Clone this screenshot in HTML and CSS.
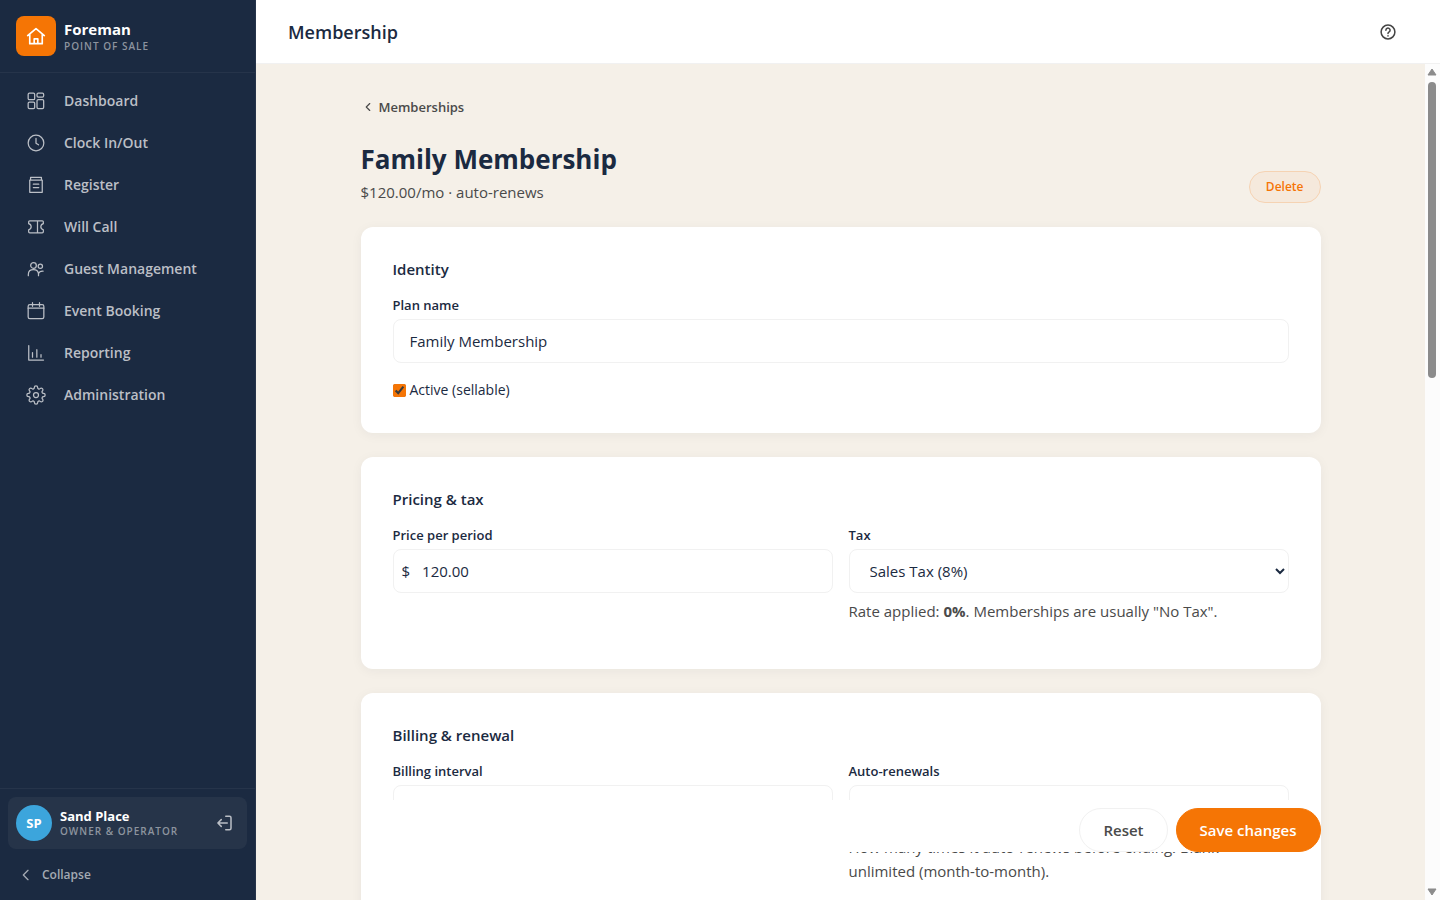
FILE: index.html
```html
<!DOCTYPE html>
<html lang="en">
<head>
  <meta charset="UTF-8" />
  <meta name="viewport" content="width=device-width, initial-scale=1.0"/>
  <title>Membership</title>
  <link rel="stylesheet" href="styles.css">
</head>
<body>
  <div class="app">
    <aside class="sidebar">
      <div class="brand">
        <div class="brand-logo">
          <svg class="icon" viewBox="0 0 24 24"><path d="M2 11.500L12 3.200l10 8.300M4.500 10v11.200h15V10M9.800 21v-5.500h4.400V21"/></svg>
        </div>
        <div>
          <div class="brand-name">Foreman</div>
          <div class="brand-sub">Point of Sale</div>
        </div>
      </div>

      <nav class="nav">
        <a href="#">
          <svg class="icon" viewBox="0 0 24 24"><rect x="2.600" y="2.600" width="7.800" height="7.800" rx="1.500"/><rect x="2.600" y="13.300" width="7.800" height="7.800" rx="1.500"/><rect x="13.200" y="2.600" width="8" height="4.600" rx="1.500"/><rect x="13.200" y="10.200" width="8" height="10.900" rx="1.500"/></svg>
          Dashboard
        </a>
        <a href="#">
          <svg class="icon" viewBox="0 0 24 24"><circle cx="12" cy="12" r="9.400"/><path d="M12 6.500v5.800l3 1.900"/></svg>
          Clock In/Out
        </a>
        <a href="#">
          <svg class="icon" viewBox="0 0 24 24"><path d="M5.500 6V2.800h13V6M4.500 6h15v14.800h-15zM8.800 11h6.500M8.800 15h6.500"/></svg>
          Register
        </a>
        <a href="#">
          <svg class="icon" viewBox="0 0 24 24"><path d="M4.500 4.500h15a1.300 1.300 0 0 1 1.300 1.300V8c-2 .6-3 1.800-3 3.700s1 3.100 3 3.700v2.300a1.300 1.300 0 0 1-1.300 1.300h-15a1.300 1.300 0 0 1-1.300-1.300v-2.300c2-.6 3-1.800 3-3.700S5.200 8.600 3.200 8V5.800a1.300 1.300 0 0 1 1.300-1.300zM13.800 4.500V19"/></svg>
          Will Call
        </a>
        <a href="#">
          <svg class="icon" viewBox="0 0 24 24"><circle cx="9" cy="7.700" r="3.400"/><circle cx="17.200" cy="8.600" r="2.600"/><path d="M2.800 20v-1.500c0-3.500 2.700-5.700 6.200-5.700 3.300 0 5.500 1.800 6 4.700V20M15 17.500c.7-2 2.600-3.200 5.500-3"/></svg>
          Guest Management
        </a>
        <a href="#">
          <svg class="icon" viewBox="0 0 24 24"><rect x="2.600" y="4.300" width="18.800" height="16.900" rx="2"/><path d="M2.600 8.600h18.800M7.800 2v4.300M16.200 2v4.300"/></svg>
          Event Booking
        </a>
        <a href="#">
          <svg class="icon" viewBox="0 0 24 24"><path d="M3.300 3v17.500H21M7.800 11.500v5.500M13 8v9M18 14v3"/></svg>
          Reporting
        </a>
        <a href="#">
          <svg class="icon" viewBox="0 0 24 24"><circle cx="12" cy="12" r="3"/><path d="M19.400 15a1.650 1.650 0 0 0 .33 1.820l.06.06a2 2 0 1 1-2.830 2.830l-.06-.06a1.650 1.650 0 0 0-2.820 1.170V21a2 2 0 0 1-4 0v-.09a1.650 1.650 0 0 0-2.820-1.260l-.06.06a2 2 0 1 1-2.830-2.830l.06-.06A1.650 1.650 0 0 0 3.090 14H3a2 2 0 0 1 0-4h.09a1.650 1.650 0 0 0 1.260-2.820l-.06-.06a2 2 0 1 1 2.830-2.830l.06.06A1.650 1.650 0 0 0 10 3.090V3a2 2 0 0 1 4 0v.09a1.650 1.650 0 0 0 2.820 1.260l.06-.06a2 2 0 1 1 2.830 2.830l-.06.06A1.650 1.650 0 0 0 20.910 10H21a2 2 0 0 1 0 4h-.09a1.650 1.650 0 0 0-1.510 1z"/></svg>
          Administration
        </a>
      </nav>

      <div class="sidebar-footer">
        <div class="user">
          <div class="avatar">SP</div>
          <div class="user-info">
            <div class="user-name">Sand Place</div>
            <div class="user-role">Owner &amp; Operator</div>
          </div>
          <button class="logout-btn" type="button" aria-label="Log out">
            <svg class="icon" viewBox="0 0 24 24"><path d="M7 7.500L2.500 12 7 16.500M2.500 12H15M13 3h5a2 2 0 0 1 2 2v14a2 2 0 0 1-2 2h-5"/></svg>
          </button>
        </div>
        <button class="collapse-btn" type="button">
          <svg class="icon icon-small" viewBox="0 0 24 24"><path d="M15 5l-7 7 7 7"/></svg>
          Collapse
        </button>
      </div>
    </aside>

    <div class="page">
      <header class="topbar">
        <div class="topbar-title">Membership</div>
        <button class="help-btn" type="button" aria-label="Help">
          <svg class="icon" viewBox="0 0 24 24"><circle cx="12" cy="12" r="9.200"/><path d="M9.200 9.600a2.800 2.800 0 1 1 4.300 2.300c-1 .6-1.500 1.100-1.500 2M12 17v.2"/></svg>
        </button>
      </header>

      <div class="page-body">
        <main class="scroll-area">
          <form class="content" id="planForm">
            <a class="back-link" href="#">
              <svg class="icon" viewBox="0 0 24 24"><path d="M15 6l-6 6 6 6"/></svg>
              Memberships
            </a>

            <div class="page-head">
              <div>
                <h1>Family Membership</h1>
                <p class="subtitle">$120.00/mo · auto-renews</p>
              </div>
              <button class="btn-delete" type="button">Delete</button>
            </div>

            <section class="card">
              <h2>Identity</h2>
              <div class="form-group">
                <label for="planName">Plan name</label>
                <input class="control" type="text" id="planName" value="Family Membership" />
              </div>
              <label class="check" for="active">
                <input type="checkbox" id="active" checked />
                Active (sellable)
              </label>
            </section>

            <section class="card">
              <h2>Pricing &amp; tax</h2>
              <div class="form-row">
                <div class="form-group">
                  <label for="price">Price per period</label>
                  <div class="control money">
                    <span>$</span>
                    <input type="text" id="price" value="120.00" />
                  </div>
                </div>
                <div class="form-group">
                  <label for="tax">Tax</label>
                  <select class="control" id="tax">
                    <option>Sales Tax (8%)</option>
                    <option>No Tax</option>
                  </select>
                  <p class="hint">Rate applied: <strong>0%</strong>. Memberships are usually "No Tax".</p>
                </div>
              </div>
            </section>

            <section class="card">
              <h2>Billing &amp; renewal</h2>
              <div class="form-row">
                <div class="form-group">
                  <label for="interval">Billing interval</label>
                  <select class="control" id="interval">
                    <option>Monthly</option>
                    <option>Yearly</option>
                  </select>
                </div>
                <div class="form-group">
                  <label for="renewals">Auto-renewals</label>
                  <input class="control" type="text" id="renewals" />
                  <p class="hint">How many times it auto-renews before ending. Blank = unlimited (month-to-month).</p>
                </div>
              </div>
            </section>

            <div class="action-bar">
              <button class="btn" type="reset">Reset</button>
              <button class="btn btn-primary" type="submit">Save changes</button>
            </div>
          </form>
        </main>

        <div class="scroll-rail" aria-hidden="true">
          <svg viewBox="0 0 10 8"><path d="M5 1l4 6H1z"/></svg>
          <div class="scroll-track"><div class="scroll-thumb"></div></div>
          <svg viewBox="0 0 10 8"><path d="M5 7l4-6H1z"/></svg>
        </div>
      </div>
    </div>
  </div>

  <script>
    document.getElementById('planForm').addEventListener('submit', e => {
      e.preventDefault();
    });
  </script>
</body>
</html>
```
FILE: styles.css
```css
* {
  box-sizing: border-box;
}

body {
  margin: 0;
  font-family: "Open Sans", "Noto Sans", sans-serif;
  font-size: 15px;
  line-height: 24px;
  color: #1b2a41;
  background: #f5f0e8;
}

button, input, select {
  font: inherit;
  color: inherit;
}

button {
  cursor: pointer;
}

h1, h2, p {
  margin: 0;
}

a {
  color: inherit;
  text-decoration: none;
}

.icon {
  width: 20px;
  height: 20px;
  flex: none;
  fill: none;
  stroke: currentColor;
  stroke-width: 1.5;
  stroke-linecap: round;
  stroke-linejoin: round;
}

.app {
  display: flex;
  height: 100vh;
}

/* sidebar */
.sidebar {
  width: 256px;
  flex: none;
  display: flex;
  flex-direction: column;
  background: #1b2a41;
  border-right: 1px solid #26344a;
}

.brand {
  display: flex;
  align-items: center;
  gap: 8px;
  padding: 16px;
  border-bottom: 1px solid #26344a;
}

.brand-logo {
  width: 40px;
  height: 40px;
  display: flex;
  align-items: center;
  justify-content: center;
  background: #f57505;
  color: #fff;
  border-radius: 8px;
}

.brand-logo .icon {
  stroke-width: 2;
}

.brand-name {
  font-weight: 700;
  line-height: 20px;
  color: #fff;
}

.brand-sub, .user-role {
  font-size: 10px;
  font-weight: 600;
  line-height: 14px;
  letter-spacing: 1px;
  text-transform: uppercase;
  color: #8d949f;
}

.nav {
  flex: 1;
  display: flex;
  flex-direction: column;
  gap: 2px;
  padding: 8px;
}

.nav a {
  display: flex;
  align-items: center;
  gap: 18px;
  height: 40px;
  padding: 0 18px;
  font-size: 14px;
  font-weight: 600;
  color: #bbbfc6;
  border-radius: 8px;
}

.sidebar-footer {
  padding: 8px;
  border-top: 1px solid #26344a;
}

.user {
  display: flex;
  align-items: center;
  gap: 8px;
  padding: 8px;
  margin-bottom: 8px;
  background: #263449;
  border-radius: 8px;
}

.avatar {
  width: 36px;
  height: 36px;
  line-height: 36px;
  text-align: center;
  font-size: 13px;
  font-weight: 700;
  color: #fff;
  background: #3ca5dc;
  border-radius: 50%;
}

.user-info {
  flex: 1;
}

.user-name {
  font-size: 13px;
  font-weight: 700;
  line-height: 16px;
  color: #fff;
}

.logout-btn {
  display: flex;
  padding: 5px;
  border: none;
  background: none;
  color: #bbbfc6;
}

.logout-btn .icon {
  width: 18px;
  height: 18px;
  stroke-width: 2;
}

.collapse-btn {
  display: flex;
  align-items: center;
  gap: 8px;
  width: 100%;
  height: 35px;
  padding: 0 10px;
  border: none;
  background: none;
  font-size: 12px;
  font-weight: 600;
  color: #a4aab3;
}

.icon-small {
  width: 16px;
  height: 16px;
  stroke-width: 2;
}

/* top bar */
.page {
  flex: 1;
  min-width: 0;
  display: flex;
  flex-direction: column;
}

.topbar {
  display: flex;
  align-items: center;
  justify-content: space-between;
  height: 64px;
  flex: none;
  padding: 0 43px 0 32px;
  background: #fff;
  border-bottom: 1px solid #f1f1f1;
}

.topbar-title {
  font-size: 18px;
  font-weight: 600;
}

.help-btn {
  display: flex;
  padding: 0;
  border: none;
  background: none;
  color: #444;
}

.help-btn .icon {
  width: 18px;
  height: 18px;
  stroke-width: 2;
}

.page-body {
  flex: 1;
  min-height: 0;
  display: flex;
}

.scroll-area {
  flex: 1;
  overflow-y: auto;
  padding: 32px;
  scrollbar-width: none;
}

.scroll-rail {
  width: 15px;
  display: flex;
  flex-direction: column;
  align-items: center;
  padding: 4px 1px 4px 0;
  background: #fcfcfc;
}

.scroll-rail svg {
  width: 10px;
  height: 8px;
  fill: #8b8b8b;
  stroke: #8b8b8b;
  stroke-linejoin: round;
}

.scroll-track {
  flex: 1;
  width: 8px;
  padding: 6px 0;
}

.scroll-thumb {
  height: 37%;
  background: #8b8b8b;
  border-radius: 4px;
}

/* content */
.content {
  max-width: 960px;
  margin: 0 auto;
}

.back-link {
  display: inline-flex;
  align-items: center;
  gap: 4px;
  height: 22px;
  margin-bottom: 24px;
  font-size: 13px;
  font-weight: 600;
  color: #4a4a4a;
  vertical-align: top;
}

.back-link .icon {
  width: 14px;
  height: 14px;
  stroke-width: 2;
}

.page-head {
  display: flex;
  align-items: flex-end;
  justify-content: space-between;
  margin-bottom: 24px;
}

h1 {
  font-size: 26px;
  font-weight: 700;
  line-height: 35px;
}

.subtitle {
  margin-top: 4px;
  line-height: 22px;
  color: #4a4a4a;
}

.btn-delete {
  height: 32px;
  padding: 0 16px;
  font-size: 12px;
  font-weight: 600;
  color: #f57505;
  background: #f5e9dc;
  border: 1px solid #f5d3b3;
  border-radius: 16px;
}

.card {
  padding: 32px;
  margin-bottom: 24px;
  background: #fff;
  border-radius: 12px;
  box-shadow: 0 2px 12px rgba(27, 42, 65, 0.05);
}

h2 {
  margin-bottom: 16px;
  font-size: 15px;
  font-weight: 600;
  line-height: 20px;
}

.form-group {
  display: flex;
  flex-direction: column;
}

.form-group label {
  margin-bottom: 4px;
  font-size: 13px;
  font-weight: 600;
  line-height: 20px;
}

.form-row {
  display: grid;
  grid-template-columns: 1fr 1fr;
  gap: 16px;
  margin-bottom: 14px;
}

.control {
  width: 100%;
  height: 44px;
  padding: 0 16px;
  background: #fff;
  border: 1px solid #f1f1f1;
  border-radius: 8px;
}

select.control {
  padding: 0 0 0 16px;
}

.money {
  display: flex;
  align-items: center;
  gap: 12px;
  padding: 0 8px;
}

.money input {
  flex: 1;
  min-width: 0;
  padding: 0;
  border: none;
  outline: none;
}

.check {
  display: flex;
  align-items: center;
  gap: 4px;
  margin-top: 16px;
  font-size: 14px;
  line-height: 22px;
}

.check input {
  width: 13px;
  height: 13px;
  margin: 0;
  accent-color: #f57505;
}

.hint {
  margin-top: 6px;
  color: #4a4a4a;
}

.action-bar {
  position: sticky;
  bottom: 16px;
  display: flex;
  justify-content: flex-end;
  gap: 8px;
  padding-top: 8px;
  background: #fff;
}

.btn {
  height: 44px;
  padding: 0 23px;
  font-weight: 600;
  color: #4a4a4a;
  background: #fff;
  border: 1px solid #f1f1f1;
  border-radius: 22px;
}

.btn-primary {
  color: #fff;
  background: #f57505;
  border-color: #f57505;
}
```
